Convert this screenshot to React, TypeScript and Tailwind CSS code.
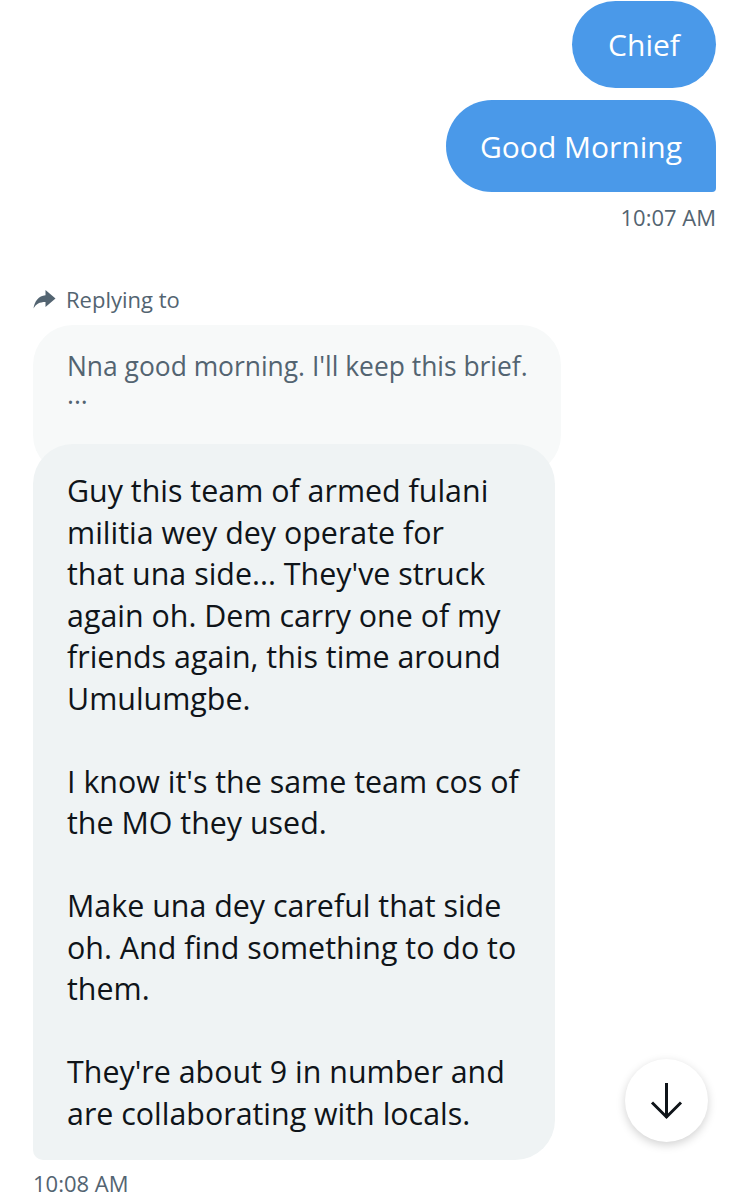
import React from "react";

const font = { fontFamily: '"Open Sans", "Noto Sans", Arial, sans-serif' };

const lines1 = [
  "Guy this team of armed fulani",
  "militia wey dey operate for",
  "that una side... They've struck",
  "again oh. Dem carry one of my",
  "friends again, this time around",
  "Umulumgbe.",
];
const lines2 = ["I know it's the same team cos of", "the MO they used."];
const lines3 = ["Make una dey careful that side", "oh. And find something to do to", "them."];
const lines4 = ["They're about 9 in number and", "are collaborating with locals."];

function Para({ lines }: { lines: string[] }) {
  return (
    <div>
      {lines.map((l, i) => (
        <div key={i} className="whitespace-nowrap">
          {l}
        </div>
      ))}
    </div>
  );
}

export default function App() {
  return (
    <div className="w-[750px] h-[1200px] bg-white overflow-hidden relative" style={font}>
      <div className="flex flex-col items-end pr-[34px] pt-[1px]">
        <div className="h-[87px] w-[144px] rounded-[44px] bg-[#4a99e9] text-white text-[30px] flex items-center justify-center">
          Chief
        </div>
        <div className="mt-[12px] h-[92px] w-[270px] rounded-[46px] rounded-br-[4px] bg-[#4a99e9] text-white text-[30px] flex items-center justify-center">
          Good Morning
        </div>
        <div className="mt-[10px] text-[22px] text-[#536471] leading-[30px]">10:07 AM</div>
      </div>

      <div className="pl-[33px] mt-[52px]">
        <div className="flex items-center gap-[9px] h-[30px]">
          <svg width="25" height="22" viewBox="0 0 24 22" className="ml-[-1px]">
            <path d="M13 2 L23 10.5 L13 19 V14 C7 14 3.5 16 1 20.5 C2 13 6 8 13 7.2 Z" fill="#536471" />
          </svg>
          <span className="text-[22px] text-[#536471]">Replying to</span>
        </div>

        <div className="mt-[11px] w-[528px] h-[150px] rounded-[40px] bg-[#f7f9f9] pl-[34px] pt-[25px] text-[26.4px] text-[#536471] leading-[32px]">
          <div className="whitespace-nowrap">Nna good morning. I'll keep this brief.</div>
          <div className="leading-[24px]">...</div>
        </div>

        <div className="-mt-[31px] w-[522px] h-[716px] rounded-[40px] rounded-bl-[10px] bg-[#eff3f4] pl-[34px] pt-[26px] text-[30.4px] leading-[41.5px] text-[#0f1419] relative">
          <div className="flex flex-col gap-[41.5px]">
            <Para lines={lines1} />
            <Para lines={lines2} />
            <Para lines={lines3} />
            <Para lines={lines4} />
          </div>
        </div>

        <div className="mt-[8px] text-[22px] text-[#536471] leading-[30px]">10:08 AM</div>
      </div>

      <div className="absolute left-[625px] top-[1059px] w-[83px] h-[83px] rounded-full bg-white shadow-[0_3px_10px_rgba(0,0,0,0.18)] flex items-center justify-center">
        <svg width="33" height="38" viewBox="0 0 33 38" fill="none">
          <path d="M16.5 1 V35.5" stroke="#0f1419" strokeWidth="3" />
          <path d="M2 20.5 L16.5 35 L31 20.5" stroke="#0f1419" strokeWidth="3" strokeLinejoin="miter" />
        </svg>
      </div>
    </div>
  );
}
